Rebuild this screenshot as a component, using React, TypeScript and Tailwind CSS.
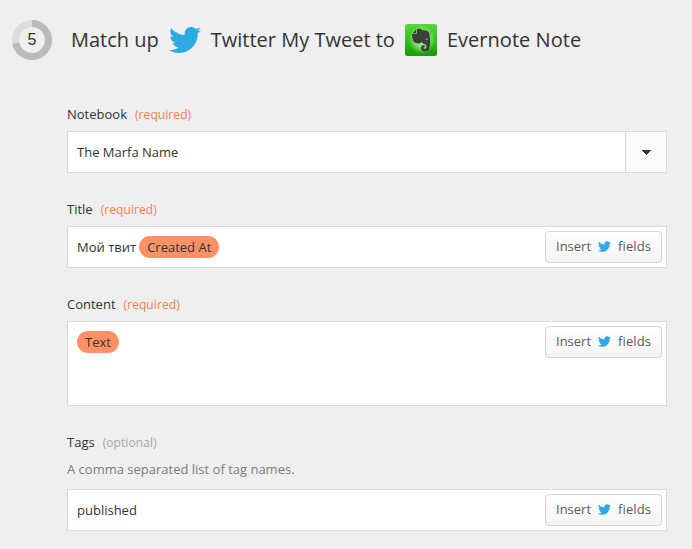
import type { ReactNode } from "react";
import { FaTwitter } from "react-icons/fa";

function StepBadge({ step }: { step: number }) {
  return (
    <div className="grid h-10 w-10 shrink-0 place-items-center">
      <svg viewBox="0 0 40 40" className="col-start-1 row-start-1 h-10 w-10">
        <circle cx="20" cy="20" r="16.5" fill="none" stroke="#dcdcdc" strokeWidth="7" />
        <path d="M20 3.5A16.5 16.5 0 1 1 3.8 23.2" fill="none" stroke="#bababa" strokeWidth="7" />
      </svg>
      <span className="col-start-1 row-start-1 font-['Liberation_Sans',sans-serif] text-[16px] leading-none">
        {step}
      </span>
    </div>
  );
}

function EvernoteLogo() {
  return (
    <svg viewBox="0 0 32 32" className="ml-[10px] h-8 w-8">
      <defs>
        <linearGradient id="evernoteTile" x1="0" y1="0" x2="0" y2="1">
          <stop offset="0" stopColor="#56d83f" />
          <stop offset="1" stopColor="#179d00" />
        </linearGradient>
        <radialGradient id="evernoteGlow" cx="0.5" cy="0.5" r="0.5">
          <stop offset="0" stopColor="#a5e898" />
          <stop offset="0.5" stopColor="#9ce58c" stopOpacity="0.85" />
          <stop offset="1" stopColor="#7edb69" stopOpacity="0" />
        </radialGradient>
      </defs>
      <rect width="32" height="32" rx="2.5" fill="url(#evernoteTile)" />
      <ellipse cx="17" cy="15.5" rx="14" ry="15" fill="url(#evernoteGlow)" />
      <g fill="#3b3f3b">
        <path d="M7.6 9.2 11.2 5.6V8.5Q11.2 9.2 10.5 9.2Z" />
        <path d="M12 5.2C14 4.5 16 4.9 17 6L21.5 6.8C23.6 7.2 24 8.5 24.5 11C25.3 15 25.3 20 24.2 25C23.7 27 22.3 27.4 20 27.4C17.5 27.4 16 26.2 16 24C16 22 17.4 20.9 19.6 20.9V23C18.6 23 18.3 23.5 18.5 24.2C18.8 25.2 21.1 25.1 21.4 24C21.8 22.3 21.3 20.4 19.5 20C18 19.6 17 19 16.7 17.8C16 19.6 14 19.7 12 19.2C9.3 18.6 8.2 17.5 7.5 14C7.1 12 7 10.7 7.2 10H10.8Q12 10 12 8.8Z" />
      </g>
      <path d="M20.3 15.9C20.5 14.2 22.9 14 23.1 16.2C22.2 15.7 21.2 15.6 20.3 15.9Z" fill="#70c65e" />
    </svg>
  );
}

function InsertButton() {
  return (
    <button
      type="button"
      className="flex h-8 w-[117px] shrink-0 items-center rounded-[4px] border border-[#d3d3d3] bg-linear-to-b from-white to-[#f4f4f4] pl-[10px] pb-px text-[13px] text-[#5a5a5a]"
    >
      <span>Insert</span>
      <FaTwitter className="ml-[7px] h-[13px] w-[13px] text-[#2daae1]" />
      <span className="ml-[7px] tracking-[0.1px]">fields</span>
    </button>
  );
}

function Pill({ children }: { children: ReactNode }) {
  return (
    <span className="flex h-[22px] items-center rounded-full bg-[#ff9166] px-2 pt-px">{children}</span>
  );
}

type FieldProps = {
  label: string;
  required?: boolean;
  help?: string;
  children: ReactNode;
};

function Field({ label, required, help, children }: FieldProps) {
  return (
    <section>
      <div className="flex h-5 items-baseline gap-2 leading-5">
        <span>{label}</span>
        {required ? (
          <span className="text-[12px] tracking-[0.08px] text-[#fb7c4f]">(required)</span>
        ) : (
          <span className="text-[12px] tracking-[0.08px] text-[#a6a6a6]">(optional)</span>
        )}
      </div>
      {help && <p className="mt-[7px] mb-[10px] h-5 leading-5 text-[#7c7c7c]">{help}</p>}
      <div className={help ? "" : "mt-[7px]"}>{children}</div>
    </section>
  );
}

export default function App() {
  return (
    <main className="h-[549px] w-[692px] overflow-hidden bg-[#efefef] pl-3 pt-5 font-['Open_Sans',sans-serif] text-[13px] text-[#333]">
      <header className="flex h-10 items-center">
        <StepBadge step={5} />
        <h1 className="ml-[19px] flex items-center text-[20px] leading-10 whitespace-nowrap">
          <span>Match up</span>
          <FaTwitter className="ml-[10px] h-8 w-8 text-[#2daae1]" />
          <span className="ml-[10px]">Twitter My Tweet to</span>
          <EvernoteLogo />
          <span className="ml-[10px] tracking-[0.04px]">Evernote Note</span>
        </h1>
      </header>

      <div className="mt-11 ml-[55px] flex w-[600px] flex-col gap-[26px]">
        <Field label="Notebook" required>
          <div className="flex h-[42px] border border-[#dadada] bg-white">
            <span className="flex flex-1 items-center pt-[2px] pl-[9px]">The Marfa Name</span>
            <span className="flex w-[41px] items-center justify-center border-l border-[#dadada] bg-[#fcfcfc]">
              <svg viewBox="0 0 9 5" className="h-[5px] w-[9px]" shapeRendering="crispEdges">
                <path d="M0 0h9v1H8v1H7v1H6v1H5v1H4V4H3V3H2V2H1V1H0z" fill="#333" />
              </svg>
            </span>
          </div>
        </Field>

        <Field label="Title" required>
          <div className="flex h-[42px] items-center border border-[#dadada] bg-white pr-1 pl-[9px]">
            <span className="pt-[2px]">Мой твит</span>
            <span className="ml-[3px] flex flex-1"><Pill>Created At</Pill></span>
            <InsertButton />
          </div>
        </Field>

        <Field label="Content" required>
          <div className="flex h-[85px] items-start justify-between border border-[#dadada] bg-white pt-1 pr-1 pl-[9px]">
            <span className="mt-[5px]"><Pill>Text</Pill></span>
            <InsertButton />
          </div>
        </Field>

        <Field label="Tags" help="A comma separated list of tag names.">
          <div className="flex h-[42px] items-center justify-between border border-[#dadada] bg-white pr-1 pl-[9px]">
            <span className="pt-[2px]">published</span>
            <InsertButton />
          </div>
        </Field>
      </div>
    </main>
  );
}
